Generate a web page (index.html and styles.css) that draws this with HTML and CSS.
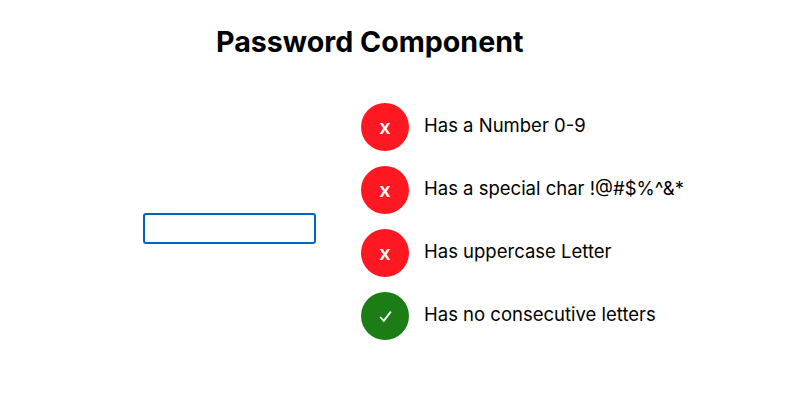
FILE: index.html
```html
<!DOCTYPE html>
<html lang="en">
<head>
<meta charset="utf-8">
<title>Password Component</title>
<link rel="stylesheet" href="styles.css">
</head>
<body>
<main class="page">
  <h1 class="title">Password Component</h1>
  <div class="content">
    <input class="password" type="text" aria-label="Password">
    <ul class="rules">
      <li class="rule"><span class="badge badge-fail">x</span><span class="label">Has a Number 0-9</span></li>
      <li class="rule"><span class="badge badge-fail">x</span><span class="label">Has a special char !@#$%^&amp;*</span></li>
      <li class="rule"><span class="badge badge-fail">x</span><span class="label">Has uppercase Letter</span></li>
      <li class="rule"><span class="badge badge-pass"><svg class="check" viewBox="0 0 14 14" width="14" height="14" aria-hidden="true"><path d="M2.2 8 L5.8 11.8 L12.8 2.6" fill="none" stroke="#fff" stroke-width="1.8"/></svg></span><span class="label">Has no consecutive letters</span></li>
    </ul>
  </div>
</main>
</body>
</html>
```
FILE: styles.css
```css
* { box-sizing: border-box; }
html, body { margin: 0; background: #fff; }
body { font-family: Inter, "Liberation Sans", sans-serif; color: #000; }
.page { width: 798px; height: 410px; padding: 24px 0 0 143px; overflow: hidden; }
.title { margin: 0 0 43px 73px; font-size: 28.6px; line-height: 36px; font-weight: 700; white-space: nowrap; }
.content { display: flex; align-items: flex-start; gap: 45px; }
.password { width: 173px; height: 31px; margin-top: 110px; padding: 0 8px; border: 2px solid #0063c6; border-radius: 3px; background: #fff; outline: none; }
.rules { margin: 0; padding: 0; list-style: none; display: flex; flex-direction: column; gap: 15px; }
.rule { display: flex; align-items: center; gap: 15px; height: 48px; }
.badge { width: 48px; height: 48px; border-radius: 50%; display: flex; align-items: center; justify-content: center; color: #fff; font-size: 20px; font-weight: 600; line-height: 1; }
.badge-fail { background: #ff1721; }
.badge-pass { background: #1c7d16; }
.check { display: block; }
.label { font-size: 18.5px; line-height: 24px; position: relative; top: -2px; white-space: nowrap; }
```
